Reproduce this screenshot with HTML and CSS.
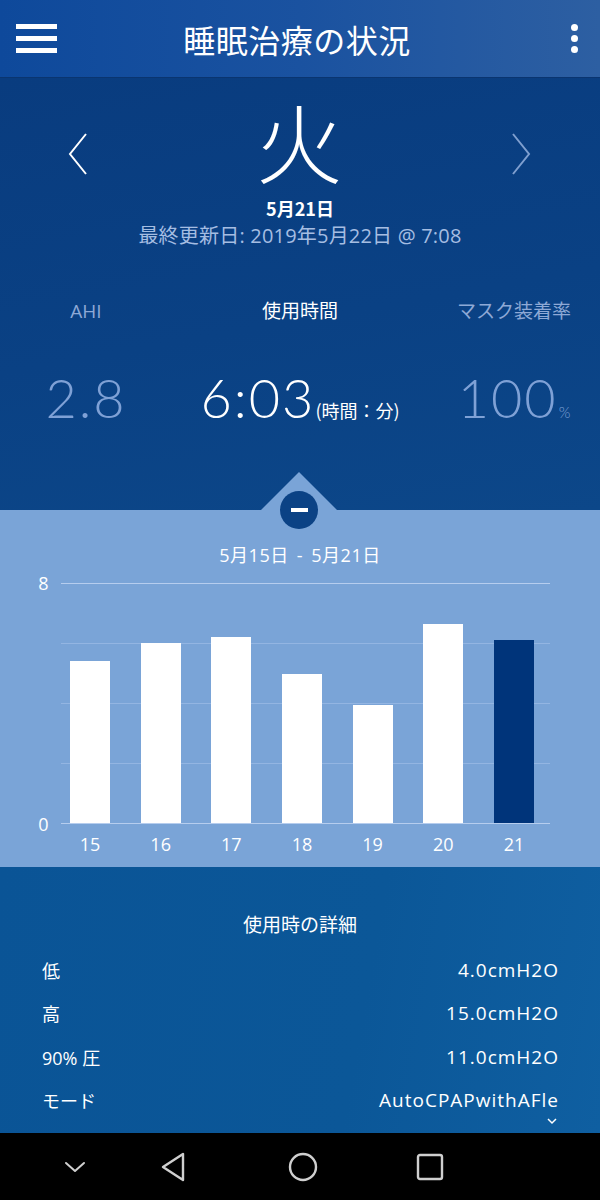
FILE: index.html
```html
<!DOCTYPE html>
<html lang="ja">
<head>
<meta charset="utf-8">
<title>睡眠治療の状況</title>
<link rel="stylesheet" href="styles.css">
</head>
<body>
<div class="screen">
  <header class="appbar">
    <div class="menu"><span></span><span></span><span></span></div>
    <h1 class="title">睡眠治療の状況</h1>
    <div class="more"><i></i><i></i><i></i></div>
  </header>

  <section class="hero">
    <div class="day-nav">
      <svg class="chev" width="22" height="42" viewBox="0 0 22 42"><path d="M19 1 L3 21 L19 41" fill="none" stroke="#ffffff" stroke-width="2"/></svg>
      <div class="day">火</div>
      <svg class="chev dim" width="22" height="42" viewBox="0 0 22 42"><path d="M3 1 L19 21 L3 41" fill="none" stroke="#7f9fcf" stroke-width="2"/></svg>
    </div>
    <div class="date">5月21日</div>
    <div class="updated">最終更新日: 2019年5月22日 @ 7:08</div>
    <div class="metrics">
      <div class="metric">
        <div class="m-label">AHI</div>
        <div class="m-value">2.8</div>
      </div>
      <div class="metric active">
        <div class="m-label">使用時間</div>
        <div class="m-value">6:03<small class="unit-jp">(時間：分)</small></div>
      </div>
      <div class="metric">
        <div class="m-label">マスク装着率</div>
        <div class="m-value">100<small class="unit-pct">%</small></div>
      </div>
    </div>
  </section>

  <section class="chart-sec">
    <div class="toggle">
      <div class="tri"></div>
      <div class="circle"><span></span></div>
    </div>
    <div class="range">5月15日 - 5月21日</div>
    <div class="chart">
      <div class="y-axis"><span>8</span><span>0</span></div>
      <div class="plot-col">
        <div class="plot">
          <div class="bar" style="height:162px"></div>
          <div class="bar" style="height:180px"></div>
          <div class="bar" style="height:186px"></div>
          <div class="bar" style="height:149px"></div>
          <div class="bar" style="height:118px"></div>
          <div class="bar" style="height:199px"></div>
          <div class="bar current" style="height:183px"></div>
        </div>
        <div class="x-axis">
          <span>15</span><span>16</span><span>17</span><span>18</span><span>19</span><span>20</span><span>21</span>
        </div>
      </div>
    </div>
  </section>

  <section class="details">
    <div class="d-title">使用時の詳細</div>
    <div class="row"><span>低</span><span class="val">4.0cmH2O</span></div>
    <div class="row"><span>高</span><span class="val">15.0cmH2O</span></div>
    <div class="row"><span>90% 圧</span><span class="val">11.0cmH2O</span></div>
    <div class="row"><span>モード</span><span class="val">AutoCPAPwithAFle</span></div>
    <div class="caret"><svg width="10" height="7" viewBox="0 0 10 7"><path d="M1 1 L5 5 L9 1" fill="none" stroke="#ffffff" stroke-width="1.5"/></svg></div>
  </section>

  <nav class="sysnav">
    <svg width="24" height="14" viewBox="0 0 24 14"><path d="M3 3 L12 11 L21 3" fill="none" stroke="#cfcfcf" stroke-width="2" stroke-linecap="round" stroke-linejoin="round"/></svg>
    <svg width="28" height="32" viewBox="0 0 28 32"><path d="M24 3 L24 29 L4 16 Z" fill="none" stroke="#cfcfcf" stroke-width="2.4" stroke-linejoin="round"/></svg>
    <svg width="32" height="32" viewBox="0 0 32 32"><circle cx="16" cy="16" r="13" fill="none" stroke="#cfcfcf" stroke-width="2.4"/></svg>
    <svg width="28" height="28" viewBox="0 0 28 28"><rect x="2" y="2" width="24" height="24" rx="2" fill="none" stroke="#cfcfcf" stroke-width="2.4"/></svg>
  </nav>
</div>
</body>
</html>
```

FILE: styles.css
```css
* { box-sizing: border-box; }
html, body { margin: 0; padding: 0; }
body {
  width: 600px;
  height: 1200px;
  overflow: hidden;
  font-family: "Open Sans", "Noto Sans CJK JP", sans-serif;
  color: #ffffff;
  background: #000;
}
.screen { display: flex; flex-direction: column; width: 600px; height: 1200px; }

/* App bar */
.appbar {
  height: 78px;
  flex: none;
  display: grid;
  grid-template-columns: 1fr auto 1fr;
  align-items: center;
  padding: 0 22px 0 16px;
  background: linear-gradient(90deg, #0e499b 0%, #1a52a0 50%, #2d5fa2 100%);
  border-bottom: 1px solid #0a3570;
}
.menu { width: 41px; display: flex; flex-direction: column; gap: 7px; }
.menu span { display: block; height: 5px; background: #ffffff; }
.title {
  margin: 0;
  font-family: "Noto Sans CJK JP", sans-serif;
  font-size: 32px;
  font-weight: 400;
  letter-spacing: 0.5px;
  line-height: 40px;
}
.more { justify-self: end; display: flex; flex-direction: column; gap: 4px; align-items: center; width: 8px; }
.more i { display: block; width: 7px; height: 7px; border-radius: 50%; background: #ffffff; }

/* Hero */
.hero {
  height: 432px;
  flex: none;
  background: linear-gradient(170deg, #093c7f 0%, #0a4184 55%, #0c4789 100%);
  display: flex;
  flex-direction: column;
  align-items: center;
}
.day-nav {
  margin-top: 18px;
  width: 100%;
  display: flex;
  align-items: flex-start;
  justify-content: space-between;
  padding: 0 68px 0 67px;
}
.chev { display: block; margin-top: 37px; }
.day {
  font-family: "Noto Sans CJK JP", sans-serif;
  font-size: 87px;
  line-height: 88px;
  font-weight: 300;
}
.date {
  margin-top: 13px;
  font-family: "Noto Sans CJK JP", sans-serif;
  font-size: 18px;
  font-weight: 700;
  line-height: 22px;
}
.updated {
  margin-top: 6px;
  font-size: 20px;
  letter-spacing: 0.2px;
  line-height: 22px;
  color: #a5bde2;
}
.metrics {
  margin-top: 53px;
  width: 100%;
  display: grid;
  grid-template-columns: 172px 1fr 172px;
}
.metric { display: flex; flex-direction: column; align-items: center; }
.m-label {
  font-size: 19px;
  line-height: 22px;
  color: #8ea9d6;
}
.m-value {
  margin-top: 46px;
  font-family: "Lato", "Inter", sans-serif;
  font-weight: 300;
  font-size: 54px;
  letter-spacing: 2px;
  line-height: 60px;
  color: #7fa1d6;
  white-space: nowrap;
}
.metric.active .m-label, .metric.active .m-value { color: #ffffff; }
.unit-jp {
  font-family: "Noto Sans CJK JP", sans-serif;
  font-size: 18px;
  font-weight: 400;
  letter-spacing: 0;
}
.unit-pct { font-size: 15px; margin-left: 1px; letter-spacing: 0; }

/* Chart section */
.chart-sec {
  position: relative;
  height: 357px;
  flex: none;
  background: #7aa4d7;
  display: flex;
  flex-direction: column;
  align-items: center;
}
.toggle {
  position: absolute;
  left: 261px;
  top: -38px;
  width: 76px;
  height: 58px;
}
.tri {
  width: 0; height: 0;
  border-left: 38px solid transparent;
  border-right: 38px solid transparent;
  border-bottom: 38px solid #7aa4d7;
}
.circle {
  position: absolute;
  left: 19px;
  top: 19px;
  width: 38px;
  height: 38px;
  border-radius: 50%;
  background: #0b4285;
  display: flex;
  align-items: center;
  justify-content: center;
}
.circle span { width: 17px; height: 4px; background: #ffffff; }
.range {
  margin-top: 34px;
  font-size: 18px;
  line-height: 22px;
  letter-spacing: 0.5px;
  word-spacing: 3px;
}
.chart {
  margin-top: 6px;
  width: 100%;
  display: flex;
}
.y-axis {
  width: 61px;
  height: 263px;
  display: flex;
  flex-direction: column;
  justify-content: space-between;
  align-items: center;
  padding-left: 26px;
  font-size: 18px;
  line-height: 22px;
}
.plot-col { width: 489px; margin-top: 11px; }
.plot {
  height: 241px;
  display: flex;
  align-items: flex-end;
  gap: 30.67px;
  padding-left: 9px;
  border-top: 1px solid #b6cdee;
  border-bottom: 1px solid #b6cdee;
  background-image: linear-gradient(#93b5e2 1px, transparent 1px);
  background-size: 100% 60px;
  background-position: 0 59px;
}
.bar { width: 40px; background: #ffffff; flex: none; }
.bar.current { background: #00347a; }
.x-axis {
  display: flex;
  gap: 30.67px;
  padding-left: 9px;
  margin-top: 9px;
}
.x-axis span {
  width: 40px;
  text-align: center;
  font-size: 18px;
  line-height: 22px;
}

/* Details */
.details {
  height: 266px;
  flex: none;
  background: linear-gradient(100deg, #0a5496 0%, #0b5798 60%, #0f5fa1 100%);
  display: flex;
  flex-direction: column;
  padding: 47px 42px 0 42px;
}
.d-title {
  text-align: center;
  font-size: 19px;
  line-height: 22px;
  margin-bottom: 12px;
}
.row {
  display: flex;
  justify-content: space-between;
  height: 43.5px;
  align-items: center;
  font-size: 18px;
}
.val { font-size: 19px; letter-spacing: 1px; margin-right: -1px; }
.caret { display: flex; justify-content: flex-end; padding-right: 1px; margin-top: -4px; }

/* System nav */
.sysnav {
  flex: 1;
  background: #000000;
  display: flex;
  align-items: center;
  padding-left: 63px;
}
.sysnav svg:nth-child(1) { margin-right: 72px; }
.sysnav svg:nth-child(2) { margin-right: 100px; }
.sysnav svg:nth-child(3) { margin-right: 97px; }
```
